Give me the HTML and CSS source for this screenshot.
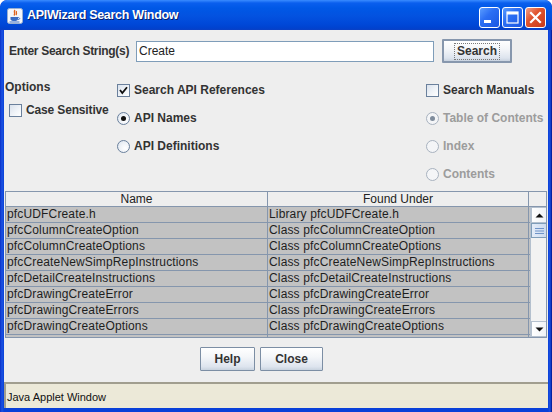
FILE: index.html
```html
<!DOCTYPE html>
<html>
<head>
<meta charset="utf-8">
<link rel="stylesheet" href="styles.css">
</head>
<body>
<div class="window">
  <div class="titlebar">
    <svg class="app-icon" width="16" height="16" viewBox="0 0 16 16">
      <rect x="0.5" y="0.5" width="15" height="15" rx="2" fill="#f4f6fa" stroke="#9bb0d0"/>
      <path d="M8 2 C6 4 9 5 7 7.5 M9.5 3 C8.5 4.5 10.5 5 9 7" stroke="#e0641e" stroke-width="1.3" fill="none"/>
      <path d="M3.5 9 H11 V11 C11 12.5 9.5 13 7.3 13 C5 13 3.5 12.5 3.5 11 Z" fill="#3a6cc4"/>
      <path d="M11 9.6 C13.2 9.6 13.2 11.6 11 11.6" stroke="#3a6cc4" stroke-width="1" fill="none"/>
      <path d="M2.5 14 H12.5" stroke="#3a6cc4" stroke-width="1"/>
    </svg>
    <span class="title">APIWizard Search Window</span>
    <div class="wbtns">
      <span class="wbtn wmin"><svg width="21" height="21" viewBox="0 0 21 21"><rect x="5" y="13" width="7" height="3" fill="#fff"/></svg></span>
      <span class="wbtn wmax"><svg width="21" height="21" viewBox="0 0 21 21"><rect x="5" y="5" width="11" height="11" fill="none" stroke="#fff" stroke-width="1.2"/><rect x="5" y="5" width="11" height="2.5" fill="#fff"/></svg></span>
      <span class="wbtn wclose"><svg width="21" height="21" viewBox="0 0 21 21"><path d="M6 6 L15 15 M15 6 L6 15" stroke="#fff" stroke-width="2.2" stroke-linecap="square"/></svg></span>
    </div>
  </div>
  <div class="client">
    <div class="search-row">
      <span class="search-label">Enter Search String(s)</span>
      <div class="field">Create</div>
      <div class="btn btn-default"><span class="focus">Search</span></div>
    </div>
    <div class="options">
      <div class="col col1">
        <div class="opt-title">Options</div>
        <div class="item item-case"><span class="cb"></span><span class="lbl">Case Sensitive</span></div>
      </div>
      <div class="col col2">
        <div class="item"><span class="cb checked"><svg width="13" height="13" viewBox="0 0 13 13"><path d="M3 6 L5.3 9 L10 3.2" stroke="#111" stroke-width="1.8" fill="none"/></svg></span><span class="lbl">Search API References</span></div>
        <div class="item"><span class="rb on"></span><span class="lbl">API Names</span></div>
        <div class="item"><span class="rb"></span><span class="lbl">API Definitions</span></div>
      </div>
      <div class="col col3">
        <div class="item"><span class="cb"></span><span class="lbl">Search Manuals</span></div>
        <div class="item dis"><span class="rb on"></span><span class="lbl">Table of Contents</span></div>
        <div class="item dis"><span class="rb"></span><span class="lbl">Index</span></div>
        <div class="item dis"><span class="rb"></span><span class="lbl">Contents</span></div>
      </div>
    </div>
    <div class="table">
      <div class="thead">
        <div class="th c1">Name</div>
        <div class="th c2">Found Under</div>
        <div class="th corner"></div>
      </div>
      <div class="tbody">
        <div class="rows">
          <div class="tr"><div class="td c1">pfcUDFCreate.h</div><div class="td c2">Library pfcUDFCreate.h</div></div>
          <div class="tr"><div class="td c1">pfcColumnCreateOption</div><div class="td c2">Class pfcColumnCreateOption</div></div>
          <div class="tr"><div class="td c1">pfcColumnCreateOptions</div><div class="td c2">Class pfcColumnCreateOptions</div></div>
          <div class="tr"><div class="td c1">pfcCreateNewSimpRepInstructions</div><div class="td c2">Class pfcCreateNewSimpRepInstructions</div></div>
          <div class="tr"><div class="td c1">pfcDetailCreateInstructions</div><div class="td c2">Class pfcDetailCreateInstructions</div></div>
          <div class="tr"><div class="td c1">pfcDrawingCreateError</div><div class="td c2">Class pfcDrawingCreateError</div></div>
          <div class="tr"><div class="td c1">pfcDrawingCreateErrors</div><div class="td c2">Class pfcDrawingCreateErrors</div></div>
          <div class="tr"><div class="td c1">pfcDrawingCreateOptions</div><div class="td c2">Class pfcDrawingCreateOptions</div></div>
          <div class="tr"><div class="td c1"></div><div class="td c2"></div></div>
        </div>
        <div class="vscroll">
          <div class="sbtn"><svg width="15" height="15" viewBox="0 0 15 15"><path d="M3.5 9.5 H11.5 L7.5 5.5 Z" fill="#111"/></svg></div>
          <div class="thumb"><svg width="15" height="14" viewBox="0 0 15 14"><path d="M3 4.5 H12 M3 7 H12 M3 9.5 H12" stroke="#6f93c8" stroke-width="1"/></svg></div>
          <div class="track"></div>
          <div class="sbtn"><svg width="15" height="15" viewBox="0 0 15 15"><path d="M3.5 5.5 H11.5 L7.5 9.5 Z" fill="#111"/></svg></div>
        </div>
      </div>
    </div>
    <div class="actions">
      <div class="btn btn-help">Help</div>
      <div class="btn btn-close">Close</div>
    </div>
    <div class="status">Java Applet Window</div>
  </div>
</div>
</body>
</html>
```

FILE: styles.css
```css
* { box-sizing: border-box; }
html, body { margin: 0; padding: 0; }
body {
  width: 552px;
  height: 412px;
  font-family: "Liberation Sans", Arial, sans-serif;
  overflow: hidden;
  background: #ffffff;
}
.window {
  width: 552px;
  height: 412px;
  background: linear-gradient(to right, #0a2fc8 0, #1b53e2 2px, #0940d8 4px, #0940d8 548px, #1a4fe0 550px, #00138c 552px);
  border-radius: 7px 7px 0 0;
  display: flex;
  flex-direction: column;
  overflow: hidden;
}
.titlebar {
  height: 30px;
  flex: none;
  display: flex;
  align-items: center;
  padding-left: 7px;
  background: linear-gradient(to bottom, #3a8cff 0, #0a5fee 3px, #0058e6 8px, #0352e0 16px, #0048d8 24px, #0042cf 28px, #0a40c4 30px);
  border-radius: 7px 7px 0 0;
}
.app-icon { flex: none; margin-top: 1px; }
.title {
  margin-left: 4px;
  color: #ffffff;
  font-weight: bold;
  font-size: 12.5px;
  text-shadow: 1px 1px 0 #0a1e6a;
  letter-spacing: -0.3px;
}
.wbtns {
  margin-left: auto;
  margin-right: 6px;
  display: flex;
  gap: 2px;
  margin-top: 4px;
}
.wbtn {
  width: 21px;
  height: 21px;
  border: 1px solid #ffffff;
  border-radius: 3px;
  display: block;
  overflow: hidden;
}
.wbtn svg { display: block; margin: -1px 0 0 -1px; }
.wmin, .wmax { background: linear-gradient(135deg, #5b9dff 0, #2c6ff4 40%, #1a56e2 100%); }
.wclose { background: linear-gradient(135deg, #f0a08a 0, #e1552f 40%, #c8391a 100%); }

.client {
  flex: 1;
  margin: 0 4px 4px 4px;
  background: #eeeeee;
  display: flex;
  flex-direction: column;
  color: #222222;
}

/* search row */
.search-row {
  display: flex;
  align-items: center;
  margin-top: 9px;
  height: 24px;
  padding-left: 5px;
}
.search-label {
  width: 127px;
  font-weight: bold;
  font-size: 12px;
  letter-spacing: -0.3px;
  color: #333333;
}
.field {
  width: 298px;
  height: 21px;
  border: 1px solid #7f9db9;
  background: #ffffff;
  font-size: 12px;
  line-height: 19px;
  padding-left: 2px;
  color: #222;
}
.btn {
  display: flex;
  align-items: center;
  justify-content: center;
  font-weight: bold;
  font-size: 12px;
  color: #333;
  background: linear-gradient(to bottom, #ffffff 0, #f4f6f9 40%, #dde4ee 85%, #c8d2df 100%);
  border: 1px solid #7c8ea4;
  border-radius: 1px;
}
.btn-default {
  margin-left: 8px;
  width: 70px;
  height: 24px;
  border: 2px solid #8797ad;
}
.focus {
  border: 1px dotted #7a7a7a;
  padding: 0 2px;
  line-height: 15px;
}

/* options */
.options {
  display: flex;
  margin-top: 13px;
  height: 112px;
}
.col { display: flex; flex-direction: column; }
.col1 { width: 113px; padding-left: 1px; padding-top: 3px; }
.col2 { width: 309px; }
.col3 { flex: 1; }
.opt-title {
  font-weight: bold;
  font-size: 12px;
  line-height: 16px;
  color: #333;
}
.item {
  height: 28px;
  display: flex;
  align-items: center;
  font-weight: bold;
  font-size: 12px;
  color: #333;
}
.item-case { height: 16px; margin-top: 7px; padding-left: 4px; }
.item-case .lbl { letter-spacing: -0.15px; }
.lbl { margin-left: 4px; }
.item.dis { color: #9c9c9c; }
.cb {
  width: 13px;
  height: 13px;
  flex: none;
  border: 1px solid #6a809c;
  background: linear-gradient(135deg, #d9e1ec 0, #eef2f7 50%, #ffffff 100%);
}
.cb svg { display: block; margin: -1px 0 0 -1px; }
.rb {
  width: 13px;
  height: 13px;
  flex: none;
  border: 1px solid #6a809c;
  border-radius: 50%;
  background: radial-gradient(circle at 65% 65%, #ffffff 0, #eef2f7 50%, #d9e1ec 100%);
  display: flex;
  align-items: center;
  justify-content: center;
}
.rb.on::after {
  content: "";
  width: 5px;
  height: 5px;
  border-radius: 50%;
  background: #111;
}
.dis .rb { border-color: #a8b2bf; background: #f4f5f7; }
.dis .rb.on::after { background: #7f8c9c; }

/* table */
.table {
  margin: 3px 1px 0 1px;
  height: 147px;
  border: 1px solid #8596ad;
  display: flex;
  flex-direction: column;
  overflow: hidden;
}
.thead {
  display: flex;
  height: 15px;
  flex: none;
  background: #eeeeee;
  border-bottom: 1px solid #8596ad;
}
.th {
  font-size: 12px;
  line-height: 14px;
  text-align: center;
  color: #222;
}
.c1 { width: 262px; border-right: 1px solid #8596ad; flex: none; }
.c2 { width: 261px; border-right: 1px solid #8596ad; flex: none; }
.corner { flex: 1; }
.tbody {
  flex: 1;
  display: flex;
  overflow: hidden;
}
.rows { width: 524px; flex: none; }
.tr {
  display: flex;
  height: 16px;
  background: #c2c2c2;
  border-bottom: 1px solid #8596ad;
}
.td {
  font-size: 12px;
  line-height: 15px;
  padding-left: 1px;
  letter-spacing: 0.15px;
  color: #1e1e1e;
  white-space: nowrap;
  overflow: hidden;
}
.vscroll {
  flex: 1;
  display: flex;
  flex-direction: column;
  background: #f2f2f2;
  border-left: 1px solid #b4c0ce;
}
.sbtn {
  height: 16px;
  flex: none;
  border: 1px solid #b4c0ce;
  background: linear-gradient(to right, #ffffff, #eef1f5);
  display: flex;
  align-items: center;
  justify-content: center;
}
.thumb {
  height: 15px;
  flex: none;
  border: 1px solid #7f9db9;
  background: linear-gradient(to right, #e4ecf8, #cad9ee);
  display: flex;
  align-items: center;
  justify-content: center;
}
.track { flex: 1; }

/* actions */
.actions {
  display: flex;
  gap: 5px;
  margin-top: 9px;
  padding-left: 196px;
}
.btn-help { width: 55px; height: 24px; }
.btn-close { width: 63px; height: 24px; }

/* status */
.status {
  margin-top: 11px;
  height: 26px;
  background: #ece9d8;
  border-top: 2px solid #a19e8f;
  border-left: 2px solid #a19e8f;
  font-size: 11px;
  line-height: 13px;
  padding: 7px 0 0 1px;
  color: #111;
}
```
